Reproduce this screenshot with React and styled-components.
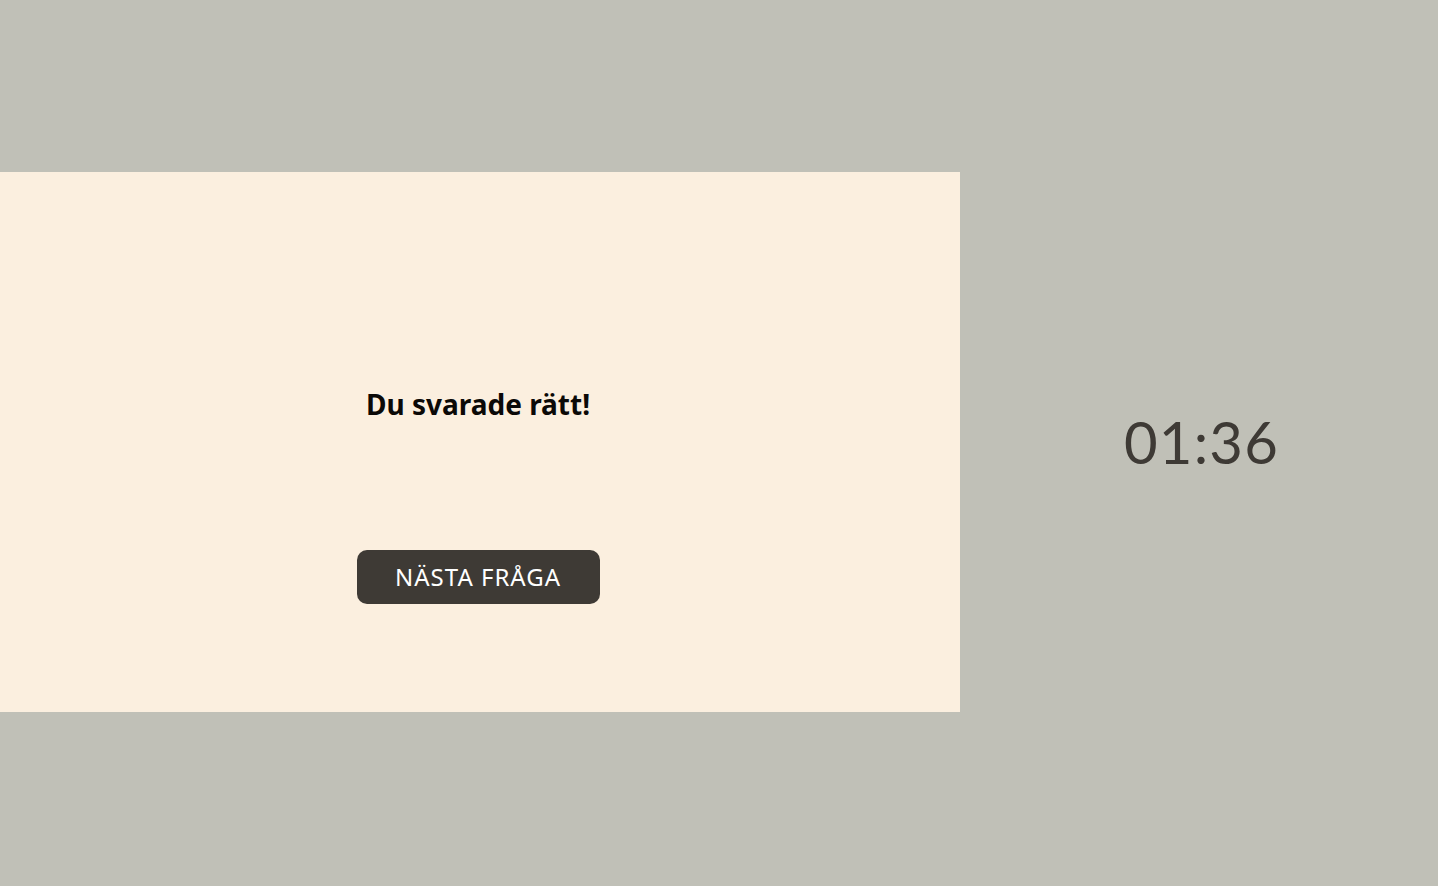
import React from "react";
import styled, { createGlobalStyle } from "styled-components";

const Global = createGlobalStyle`
  html, body { margin: 0; padding: 0; }
  body { background: #c0c0b7; font-family: "Noto Sans", "Open Sans", sans-serif; }
`;

const Page = styled.div`
  height: 886px;
  box-sizing: border-box;
  padding-top: 172px;
  display: flex;
  align-items: flex-start;
`;

const Card = styled.section`
  width: 960px;
  height: 540px;
  background: #fbefdf;
  display: flex;
  flex-direction: column;
  align-items: center;
  padding: 213px 4px 0 0;
  box-sizing: border-box;
`;

const Heading = styled.h2`
  margin: 0;
  font-family: "Noto Sans", sans-serif;
  font-weight: 700;
  font-size: 28px;
  line-height: 38px;
  color: #0b0907;
`;

const Button = styled.button`
  margin-top: 127px;
  width: 243px;
  height: 54px;
  border: none;
  border-radius: 10px;
  background: #3e3a35;
  color: #ffffff;
  font-family: "Noto Sans", sans-serif;
  font-size: 24px;
  font-weight: 400;
  letter-spacing: 1px;
  padding: 0 0 2px;
  cursor: pointer;
`;

const Side = styled.aside`
  flex: 1;
  height: 540px;
  display: flex;
  justify-content: center;
  align-items: center;
  padding-left: 5px;
`;

const Timer = styled.div`
  font-family: Lato, "Noto Sans", sans-serif;
  font-size: 58px;
  color: #3e3a35;
  letter-spacing: 1.2px;
  padding-bottom: 2px;
`;

export default function App() {
  return (
    <>
      <Global />
      <Page>
        <Card>
          <Heading>Du svarade rätt!</Heading>
          <Button>NÄSTA FRÅGA</Button>
        </Card>
        <Side>
          <Timer>01:36</Timer>
        </Side>
      </Page>
    </>
  );
}
